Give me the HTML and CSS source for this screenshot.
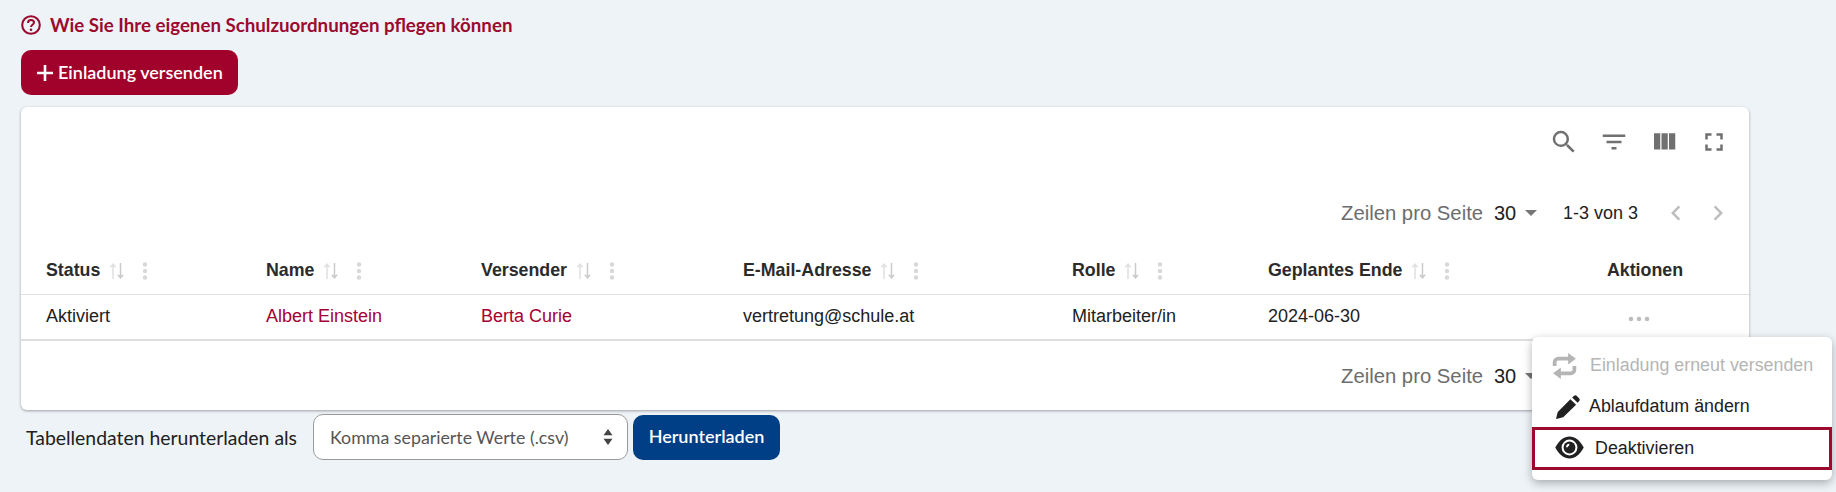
FILE: index.html
```html
<!DOCTYPE html>
<html lang="de">
<head>
<meta charset="utf-8">
<title>Einladungen</title>
<link rel="stylesheet" href="styles.css">
</head>
<body>
<svg class="defs" width="0" height="0" aria-hidden="true">
  <symbol id="sort" viewBox="0 0 14 16">
    <path d="M3 16V1.5M.4 4.2 3 1.2l2.6 3" fill="none" stroke="#e0e0e0" stroke-width="1.5"/>
    <path d="M10.5 0v14.5M7.9 11.8l2.6 3 2.6-3" fill="none" stroke="#cacaca" stroke-width="1.5"/>
  </symbol>
  <symbol id="dots" viewBox="0 0 6 18">
    <circle cx="3" cy="2.5" r="2.2"/><circle cx="3" cy="9" r="2.2"/><circle cx="3" cy="15.5" r="2.2"/>
  </symbol>
  <symbol id="left" viewBox="0 0 24 24"><path d="M15.41 7.41 14 6l-6 6 6 6 1.41-1.41L10.83 12z"/></symbol>
  <symbol id="right" viewBox="0 0 24 24"><path d="M10 6 8.59 7.41 13.17 12l-4.58 4.59L10 18l6-6z"/></symbol>
</svg>
<main class="page">
  <a class="help" href="#">
    <svg class="help-icon" viewBox="0 0 20 20"><circle cx="10" cy="10" r="8.8" fill="none" stroke="currentColor" stroke-width="2.1"/><path d="M7 7.9c0-1.8 1.3-2.9 3-2.9s3 1.1 3 2.6c0 2.2-3 2.2-3 4.4" fill="none" stroke="currentColor" stroke-width="2"/><circle cx="10" cy="14.7" r="1.3" fill="currentColor"/></svg>
    <span>Wie Sie Ihre eigenen Schulzuordnungen pflegen können</span>
  </a>
  <button class="btn btn-red" type="button">
    <svg class="plus" viewBox="0 0 16 16"><path d="M8 0v16M0 8h16" stroke="currentColor" stroke-width="2.6" fill="none"/></svg>
    <span class="btn-text">Einladung versenden</span>
  </button>

  <section class="card">
    <div class="toolbar">
      <svg class="tool" viewBox="0 0 24 24"><path d="M15.5 14h-.79l-.28-.27A6.47 6.47 0 0 0 16 9.5 6.5 6.5 0 1 0 9.5 16c1.61 0 3.09-.59 4.23-1.57l.27.28v.79l5 4.99L20.49 19l-4.99-5zm-6 0C7.01 14 5 11.99 5 9.5S7.01 5 9.5 5 14 7.01 14 9.5 11.99 14 9.5 14z"/></svg>
      <svg class="tool" viewBox="0 0 24 24"><path d="M10 18h4v-2h-4v2zM3 6v2h18V6H3zm3 7h12v-2H6v2z"/></svg>
      <svg class="tool" viewBox="0 0 24 24"><path d="M10 18h5V5h-5v13zm-6 0h5V5H4v13zM16 5v13h5V5h-5z"/></svg>
      <svg class="tool" viewBox="0 0 24 24"><path d="M7 14H5v5h5v-2H7v-3zm-2-4h2V7h3V5H5v5zm12 7h-3v2h5v-5h-2v3zM14 5v2h3v3h2V5h-5z"/></svg>
    </div>
    <div class="pager pager-top">
      <span class="pager-label">Zeilen pro Seite</span>
      <span class="pager-size">30</span><span class="caret"></span>
      <span class="pager-range">1-3 von 3</span>
      <svg class="chev"><use href="#left"/></svg>
      <svg class="chev chev-next"><use href="#right"/></svg>
    </div>
    <table class="grid">
      <colgroup>
        <col class="c1"><col class="c2"><col class="c3"><col class="c4"><col class="c5"><col class="c6"><col class="c7">
      </colgroup>
      <thead>
        <tr>
          <th><span class="th">Status<svg class="sort"><use href="#sort"/></svg><svg class="dots"><use href="#dots"/></svg></span></th>
          <th><span class="th">Name<svg class="sort"><use href="#sort"/></svg><svg class="dots"><use href="#dots"/></svg></span></th>
          <th><span class="th">Versender<svg class="sort"><use href="#sort"/></svg><svg class="dots"><use href="#dots"/></svg></span></th>
          <th><span class="th">E-Mail-Adresse<svg class="sort"><use href="#sort"/></svg><svg class="dots"><use href="#dots"/></svg></span></th>
          <th><span class="th">Rolle<svg class="sort"><use href="#sort"/></svg><svg class="dots"><use href="#dots"/></svg></span></th>
          <th><span class="th">Geplantes Ende<svg class="sort"><use href="#sort"/></svg><svg class="dots"><use href="#dots"/></svg></span></th>
          <th class="center">Aktionen</th>
        </tr>
      </thead>
      <tbody>
        <tr>
          <td>Aktiviert</td>
          <td><a href="#">Albert Einstein</a></td>
          <td><a href="#">Berta Curie</a></td>
          <td>vertretung@schule.at</td>
          <td>Mitarbeiter/in</td>
          <td>2024-06-30</td>
          <td class="center"><svg class="more" viewBox="0 0 22 6"><circle cx="3" cy="3" r="2.3"/><circle cx="11" cy="3" r="2.3"/><circle cx="19" cy="3" r="2.3"/></svg></td>
        </tr>
      </tbody>
    </table>
    <div class="pager pager-bottom">
      <span class="pager-label">Zeilen pro Seite</span>
      <span class="pager-size">30</span><span class="caret"></span>
    </div>
  </section>

  <form class="download">
    <label class="download-label" for="fmt">Tabellendaten herunterladen als</label>
    <span class="select-wrap">
      <select id="fmt" class="select"><option>Komma separierte Werte (.csv)</option></select>
      <svg class="select-arrows" viewBox="0 0 10 16"><path d="M5 0l4.5 6.2h-9zM5 16 .5 9.8h9z"/></svg>
    </span>
    <button class="btn btn-blue" type="button"><span class="btn-text">Herunterladen</span></button>
  </form>

  <ul class="menu">
    <li class="menu-item disabled">
      <svg class="mi mi-repeat" viewBox="0 0 24 25"><path d="M2.5 12.5V9a3.5 3.5 0 0 1 3.5-3.5h11M21.5 12.5V16a3.5 3.5 0 0 1-3.5 3.5H7" fill="none" stroke="currentColor" stroke-width="3.6"/><path d="M15.5 0 23 5.5 15.5 11zM8.500 14 1 19.500 8.500 25z"/></svg>
      <span>Einladung erneut versenden</span>
    </li>
    <li class="menu-item item-edit">
      <svg class="mi mi-edit" viewBox="0 0 22 22"><path d="M0 22l1.600-6.400L13.200 4l5.200 5L6.600 20.500zM14.800 2.400l1.500-1.500c.9-.9 2-.9 2.800 0l2 2c.9.900.9 2 0 2.800l-1.300 1.400z"/></svg>
      <span>Ablaufdatum ändern</span>
    </li>
    <li class="menu-item item-active">
      <svg class="mi mi-eye" viewBox="0 0 26 21"><path d="M0 10.500C3.500 3.800 8.200.5 13 .5s9.500 3.300 13 10c-3.500 6.700-8.200 10-13 10s-9.500-3.300-13-10z"/><circle cx="13" cy="10.500" r="7.200" fill="#fff"/><circle cx="13" cy="10.500" r="5.400"/><path d="M9.800 10.300a3.400 3.400 0 0 1 3-3.300v1.600a2 2 0 0 0-1.500 1.700z" fill="#fff"/></svg>
      <span>Deaktivieren</span>
    </li>
  </ul>
</main>
</body>
</html>
```

FILE: styles.css
```css
* { box-sizing: border-box; }
html, body { margin: 0; height: 100%; }
body {
  background: #eef3f7;
  font-family: "Liberation Sans", Arial, sans-serif;
  color: #212121;
  overflow: hidden;
}
.defs { position: absolute; }
.page {
  position: relative;
  height: 492px;
  padding: 13px 0 0 21px;
}
.help {
  display: flex;
  align-items: center;
  gap: 9px;
  height: 24px;
  margin-bottom: 13px;
  color: #9c0a2e;
  font: 700 18.7px/24px Lato, "Noto Sans", sans-serif;
  text-decoration: none;
}
.help-icon { width: 20px; height: 20px; flex: none; }
.btn {
  display: inline-flex;
  align-items: center;
  height: 45px;
  border: 0;
  border-radius: 10px;
  color: #fff;
  font: 600 18px Lato, "Noto Sans", sans-serif;
}
.btn-text { position: relative; top: -1px; }
.btn-red {
  width: 217px;
  padding: 0 0 0 16px;
  gap: 5px;
  background: #a0022b;
}
.plus { width: 16px; height: 16px; flex: none; }
.btn-blue {
  justify-content: center;
  width: 147px;
  background: #003e85;
}
.card {
  position: relative;
  width: 1728px;
  height: 303px;
  margin-top: 12px;
  background: #fff;
  border-radius: 6px;
  box-shadow: 0 1px 3px rgba(0, 0, 0, .35);
}
.toolbar {
  display: flex;
  justify-content: flex-end;
  gap: 20px;
  height: 88px;
  padding: 20px 20px 0 0;
}
.tool { width: 30px; height: 30px; fill: #707070; }
.pager {
  display: flex;
  align-items: center;
  height: 36px;
  padding-left: 1320px;
}
.pager-label { font-size: 20.3px; color: #6d6d6d; width: 153px; white-space: nowrap; }
.pager-size { font-size: 20px; color: #212121; width: 31px; }
.caret {
  width: 0;
  height: 0;
  border-left: 6.5px solid transparent;
  border-right: 6.5px solid transparent;
  border-top: 6.5px solid #757575;
  margin-right: 26px;
}
.pager-range { font-size: 18px; color: #212121; width: 98px; }
.chev { width: 30px; height: 30px; fill: #bdbdbd; flex: none; }
.chev-next { margin-left: 12px; }
.grid {
  width: 100%;
  table-layout: fixed;
  border-collapse: collapse;
  margin-top: 1px;
}
.c1 { width: 220px; }
.c2 { width: 215px; }
.c3 { width: 262px; }
.c4 { width: 329px; }
.c5 { width: 196px; }
.c6 { width: 298px; }
.grid th, .grid td { padding: 0 0 0 25px; text-align: left; font-size: 18px; }
.grid th {
  height: 62px;
  padding-top: 16px;
  font-size: 17.8px;
  font-weight: 700;
  color: #2b2b2b;
  border-bottom: 1px solid #e0e0e0;
  vertical-align: middle;
}
.grid td {
  height: 46px;
  color: #212121;
  border-bottom: 2px solid #e0e0e0;
}
.grid a { color: #a50034; text-decoration: none; }
.grid .center { text-align: center; padding-left: 0; }
.th { display: inline-flex; align-items: center; }
.sort { width: 14px; height: 16px; margin-left: 10px; }
.dots { width: 6px; height: 18px; margin-left: 18px; fill: #d8d8d8; }
.more { width: 22px; height: 6px; fill: #bdbdbd; margin-right: 12px; }
.pager-bottom { height: 70px; }
.download {
  display: flex;
  align-items: center;
  margin-top: 4px;
  padding-left: 5px;
}
.download-label {
  width: 287px;
  font: 400 19.4px Lato, "Noto Sans", sans-serif;
  color: #212121;
  white-space: nowrap;
}
.select-wrap { position: relative; display: block; margin-right: 5px; }
.select {
  display: block;
  width: 315px;
  height: 46px;
  padding: 0 16px;
  appearance: none;
  background: #fff;
  border: 1px solid #9a9a9a;
  border-radius: 10px;
  color: #555;
  font: 400 17.8px Lato, "Noto Sans", sans-serif;
}
.select-arrows {
  position: absolute;
  right: 15px;
  top: 15px;
  width: 10px;
  height: 16px;
  fill: #444;
  pointer-events: none;
}
.menu {
  position: absolute;
  left: 1532px;
  top: 337px;
  width: 300px;
  height: 143px;
  margin: 0;
  padding: 8px 0 0;
  list-style: none;
  background: #fff;
  border-radius: 6px;
  box-shadow: 0 3px 10px rgba(0, 0, 0, .3);
}
.menu-item {
  display: flex;
  align-items: center;
  height: 41px;
  padding-left: 20px;
  gap: 13px;
  font-size: 17.85px;
  color: #212121;
  white-space: nowrap;
}
.mi { flex: none; fill: #212121; }
.menu-item.disabled { color: #b5b5b5; }
.mi-repeat { width: 25px; height: 26px; fill: #b5b5b5; }
.item-edit { padding-left: 24px; gap: 9px; }
.mi-edit { width: 24px; height: 24px; }
.item-active {
  height: 43px;
  gap: 11px;
  border: 3px solid #9c0a2e;
  padding-left: 20px;
}
.mi-eye { width: 29px; height: 23px; position: relative; top: -1px; }
```
